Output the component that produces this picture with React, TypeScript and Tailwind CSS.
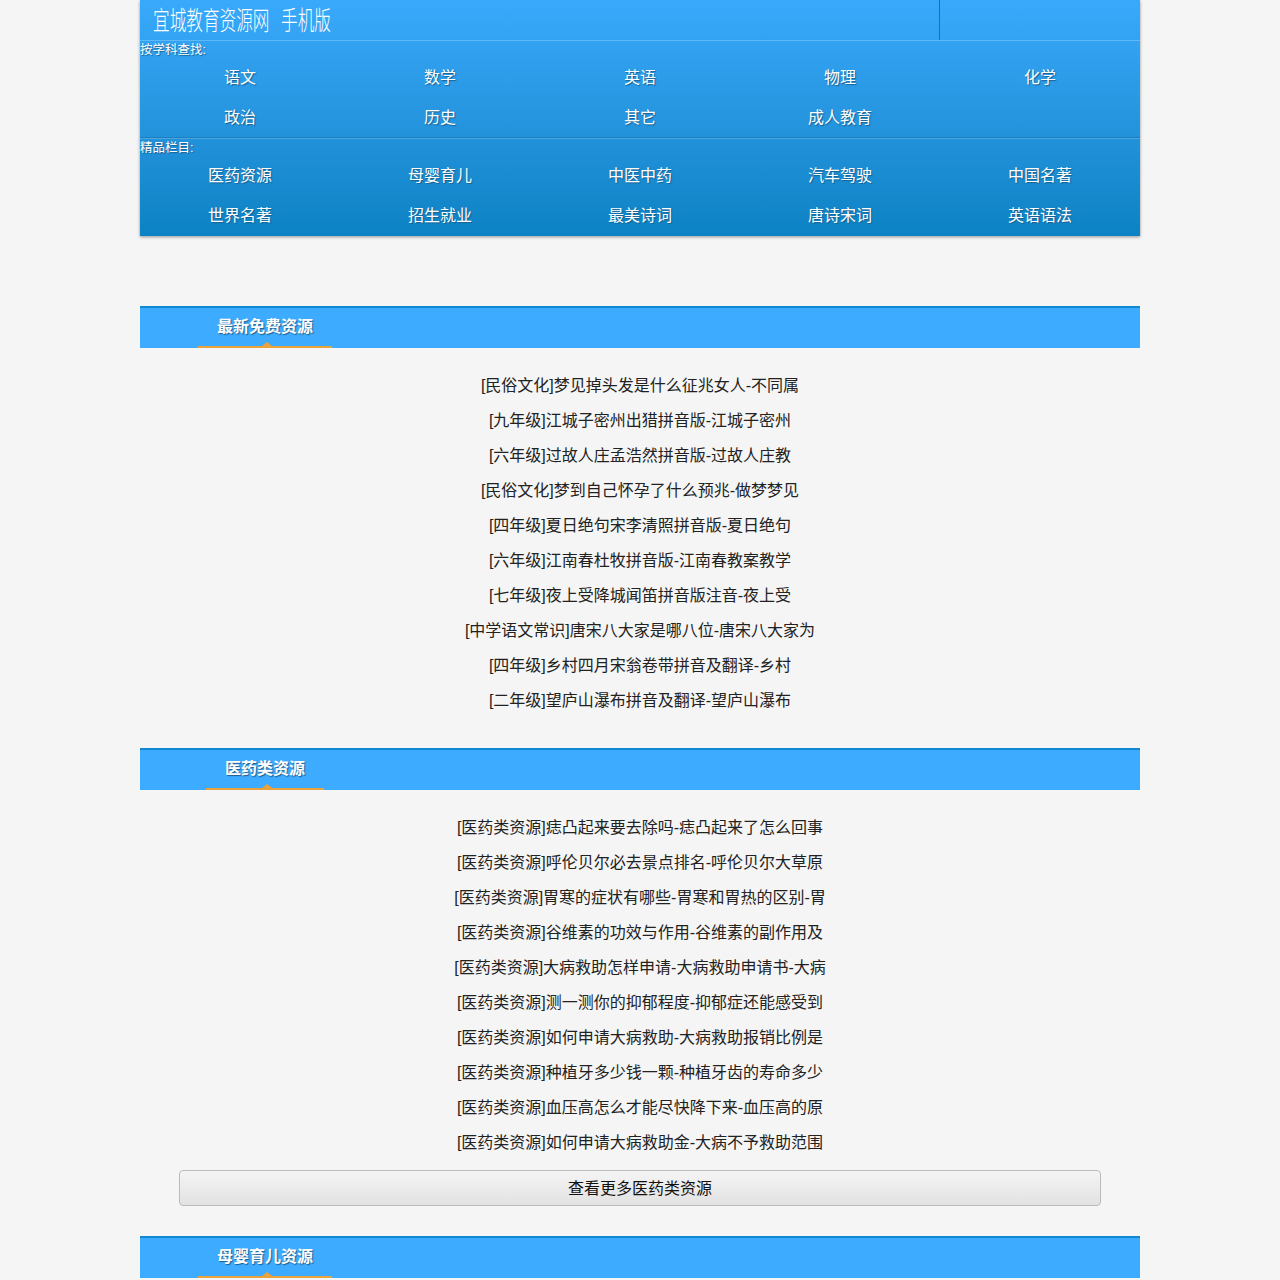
import React from 'react';

const subjects = ['语文', '数学', '英语', '物理', '化学', '政治', '历史', '其它', '成人教育'];
const columns = ['医药资源', '母婴育儿', '中医中药', '汽车驾驶', '中国名著', '世界名著', '招生就业', '最美诗词', '唐诗宋词', '英语语法'];

const latest = [
	'[民俗文化]梦见掉头发是什么征兆女人-不同属',
	'[九年级]江城子密州出猎拼音版-江城子密州',
	'[六年级]过故人庄孟浩然拼音版-过故人庄教',
	'[民俗文化]梦到自己怀孕了什么预兆-做梦梦见',
	'[四年级]夏日绝句宋李清照拼音版-夏日绝句',
	'[六年级]江南春杜牧拼音版-江南春教案教学',
	'[七年级]夜上受降城闻笛拼音版注音-夜上受',
	'[中学语文常识]唐宋八大家是哪八位-唐宋八大家为',
	'[四年级]乡村四月宋翁卷带拼音及翻译-乡村',
	'[二年级]望庐山瀑布拼音及翻译-望庐山瀑布',
];

const medical = [
	'[医药类资源]痣凸起来要去除吗-痣凸起来了怎么回事',
	'[医药类资源]呼伦贝尔必去景点排名-呼伦贝尔大草原',
	'[医药类资源]胃寒的症状有哪些-胃寒和胃热的区别-胃',
	'[医药类资源]谷维素的功效与作用-谷维素的副作用及',
	'[医药类资源]大病救助怎样申请-大病救助申请书-大病',
	'[医药类资源]测一测你的抑郁程度-抑郁症还能感受到',
	'[医药类资源]如何申请大病救助-大病救助报销比例是',
	'[医药类资源]种植牙多少钱一颗-种植牙齿的寿命多少',
	'[医药类资源]血压高怎么才能尽快降下来-血压高的原',
	'[医药类资源]如何申请大病救助金-大病不予救助范围',
];

function NavGrid({ items }: { items: string[] }) {
	return (
		<div className="grid grid-cols-5">
			{items.map(name => (
				<a key={name} className="h-10 pt-[2px] flex items-center justify-center text-base text-white [text-shadow:1px_1px_1px_#1a5f8f]">
					{name}
				</a>
			))}
		</div>
	);
}

function NavLabel({ text }: { text: string }) {
	return <div className="h-4 pt-px leading-4 text-[12.5px] text-white [text-shadow:1px_1px_1px_#1a5f8f]">{text}</div>;
}

function SectionHead({ title }: { title: string }) {
	return (
		<div className="h-[42px] bg-[#3dabff] border-t-2 border-[#0f8ad2] flex">
			<div className="w-[250px] flex justify-center">
				<div className="relative h-10 px-[19px] border-b-2 border-[#eaa23a] flex items-center text-base font-bold text-white [text-shadow:1px_1px_1px_#1f5f8f]">
					{title}
					<span className="absolute left-[calc(50%+2px)] -translate-x-1/2 bottom-0 w-0 h-0 border-x-[5px] border-x-transparent border-b-[4px] border-b-[#eaa23a]" />
				</div>
			</div>
		</div>
	);
}

function LinkList({ items }: { items: string[] }) {
	return (
		<ul className="pt-5 pb-[10px]">
			{items.map(text => (
				<li key={text} className="h-[35px] leading-[35px] text-center text-base text-[#222]">
					{text}
				</li>
			))}
		</ul>
	);
}

export default function App() {
	return (
		<div className="min-h-screen bg-[#f5f5f5] font-['Liberation_Sans','Noto_Sans_CJK_SC',sans-serif]">
			<div className="w-[1000px] mx-auto">
				<div className="h-[236px] bg-gradient-to-b from-[#39a9fc] to-[#0a82c3] shadow-[0_1px_3px_rgba(0,0,0,0.4)]">
					<div className="h-[41px] border-b border-[#5fb8f8] flex">
						<div className="w-[800px] border-r border-[#0f74b4] pl-[13px] pt-[4px]">
							<span className="inline-block origin-left scale-x-[0.64] text-[26px] leading-[30px] font-light text-white whitespace-nowrap font-['Noto_Sans_CJK_SC',sans-serif]">
								<span className="mr-[18px]">宜城教育资源网</span>手机版
							</span>
						</div>
					</div>
					<NavLabel text="按学科查找:" />
					<NavGrid items={subjects} />
					<div className="h-[2px] bg-[#1a7fc0] border-b border-[#4fa6df]" />
					<NavLabel text="精品栏目:" />
					<NavGrid items={columns} />
				</div>

				<div className="h-[70px]" />
				<SectionHead title="最新免费资源" />
				<LinkList items={latest} />
				<div className="h-5" />
				<SectionHead title="医药类资源" />
				<LinkList items={medical} />
				<div className="px-[39px]">
					<a className="h-9 pt-[2px] flex items-center justify-center rounded border border-[#bbb] bg-gradient-to-b from-[#f5f5f5] to-[#e2e2e2] text-base text-[#111]">
						查看更多医药类资源
					</a>
				</div>
				<div className="h-[30px]" />
				<SectionHead title="母婴育儿资源" />
			</div>
		</div>
	);
}
